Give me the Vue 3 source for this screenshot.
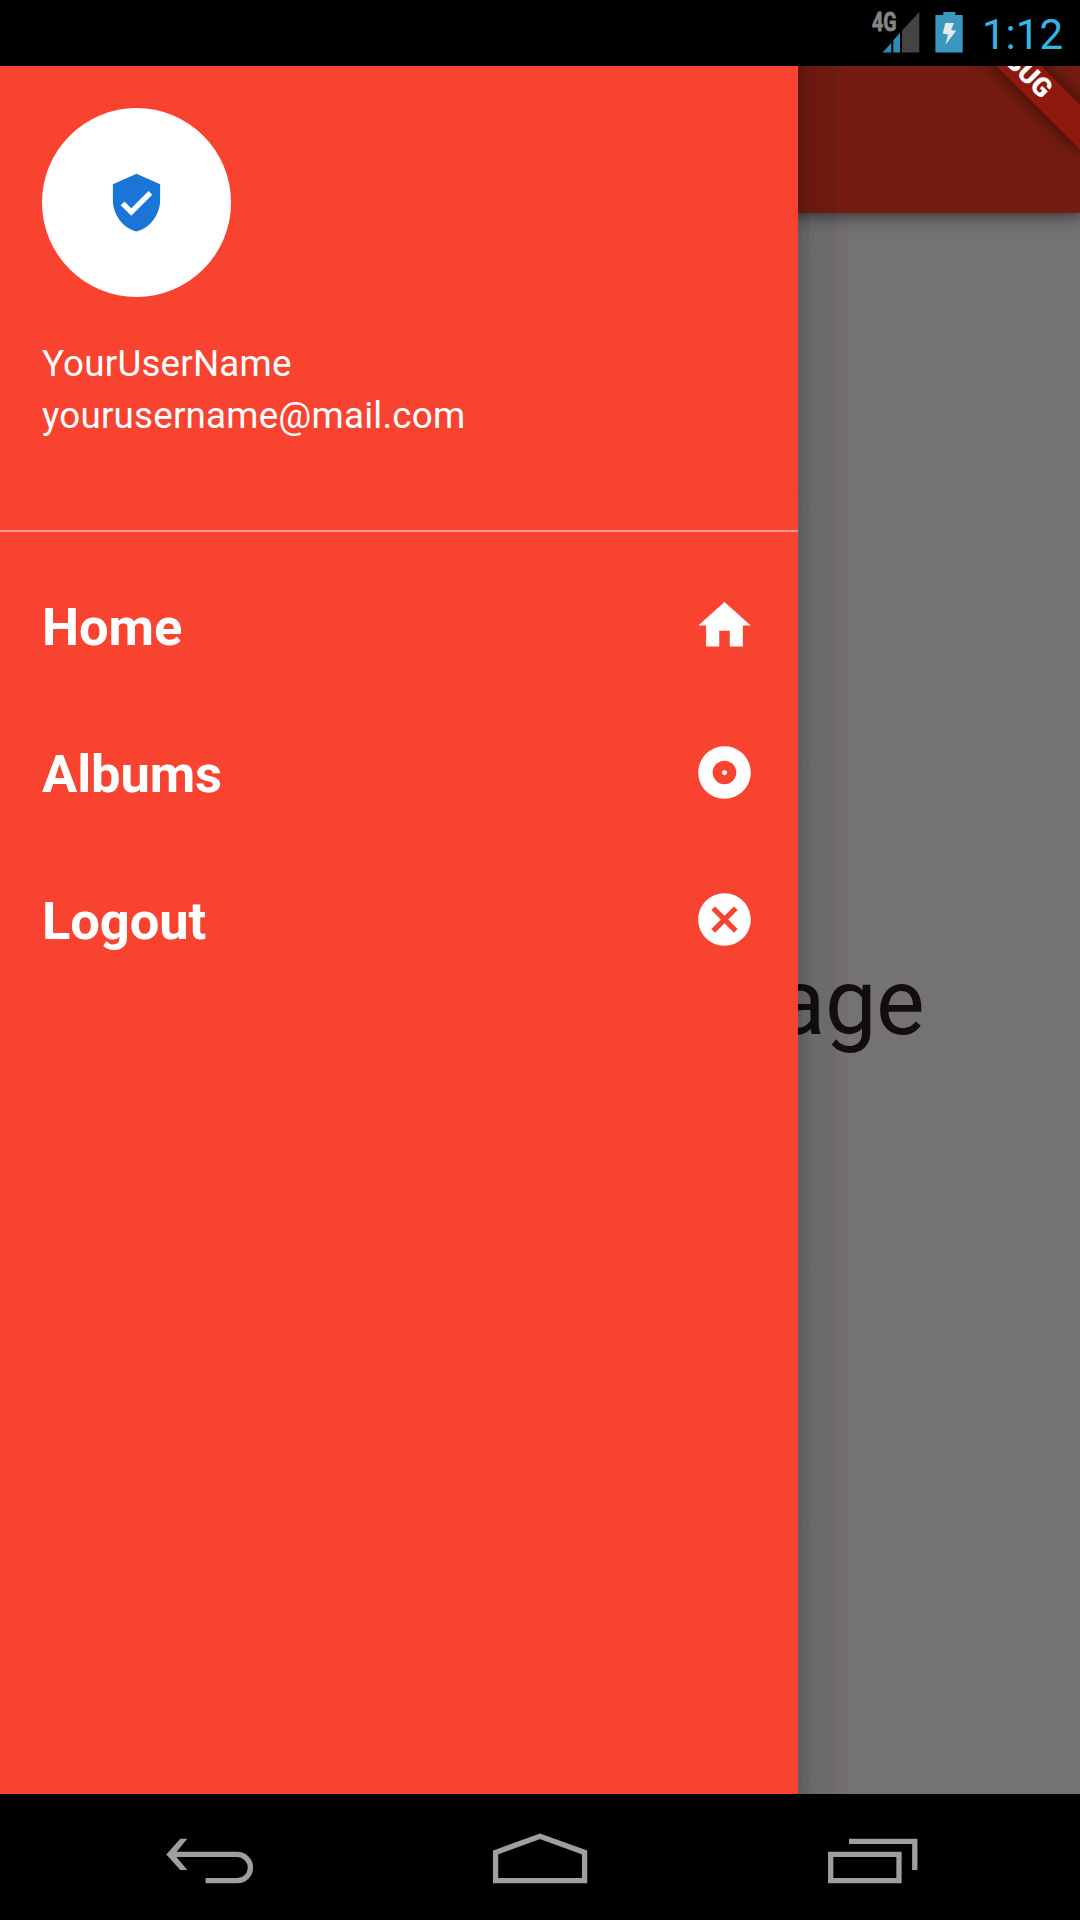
<script setup>
const menu = [
  { label: 'Home', path: 'M10 20v-6h4v6h5v-8h3L12 3 2 12h3v8z' },
  {
    label: 'Albums',
    path: 'M12 2C6.48 2 2 6.48 2 12s4.48 10 10 10 10-4.48 10-10S17.52 2 12 2zm0 14.5c-2.49 0-4.5-2.01-4.5-4.5S9.51 7.5 12 7.5s4.5 2.01 4.5 4.5-2.01 4.5-4.5 4.5zm0-5.5c-.55 0-1 .45-1 1s.45 1 1 1 1-.45 1-1-.45-1-1-1z',
  },
  {
    label: 'Logout',
    path: 'M12 2C6.47 2 2 6.47 2 12s4.47 10 10 10 10-4.47 10-10S17.53 2 12 2zm5 13.59L15.59 17 12 13.41 8.41 17 7 15.59 10.59 12 7 8.41 8.41 7 12 10.59 15.59 7 17 8.41 13.41 12 17 15.59z',
  },
]
</script>

<template>
  <div class="screen">
    <header class="status">
      <svg class="signal" viewBox="870 0 54 66">
        <text x="872" y="30.5" textLength="24.5" lengthAdjust="spacingAndGlyphs">4G</text>
        <path fill="#444" d="M902 30.7 919.3 12v40.4H902z" />
        <path fill="#2b8db3" d="M882.5 52.4 891.3 43v9.4zM893.3 40.3 900 32.8v19.6h-6.7z" />
      </svg>
      <svg class="battery" viewBox="935 0 28 66">
        <path fill="#3a97bd" d="M943.3 12h12v3h7.4v37.4h-27.3V15h7.9z" />
        <path fill="#e2eaf0" d="M945.3 23h8.6l-2.8 7 5 .8-10.6 13.9 2.5-10.3-5.3-.8z" />
      </svg>
      <span class="clock">1:12</span>
    </header>

    <main class="stage">
      <div class="page">
        <div class="appbar"></div>
        <div class="body"><span class="title">Page</span></div>
      </div>

      <aside class="drawer">
        <section class="account">
          <div class="avatar">
            <svg viewBox="0 0 24 24">
              <path d="M12 1L3 5v6c0 5.55 3.84 10.74 9 12 5.16-1.26 9-6.45 9-12V5l-9-4zm-2 16l-4-4 1.41-1.41L10 14.17l6.59-6.59L18 9l-8 8z" />
            </svg>
          </div>
          <div class="who">
            <div>YourUserName</div>
            <div>yourusername@mail.com</div>
          </div>
        </section>
        <div class="divider"></div>
        <nav>
          <a v-for="item in menu" :key="item.label" class="item">
            <span>{{ item.label }}</span>
            <svg viewBox="0 0 24 24"><path :d="item.path" /></svg>
          </a>
        </nav>
      </aside>
      <div class="edge"></div>
      <div class="banner">DEBUG</div>
    </main>

    <footer class="navbar">
      <svg viewBox="155 1794 110 126">
        <path class="line" d="M172 1854.4H237.3A13.1 13.1 0 0 1 237.3 1880.7H205.6" />
        <path class="solid" d="M166.3 1854.4 180.3 1838.8H187.3L174.4 1854.4 187.3 1870H180.3z" />
      </svg>
      <svg viewBox="485 1794 110 126">
        <path class="line" d="M495.6 1852.4 540 1836.2 584.6 1852.4V1880.7H495.6z" />
      </svg>
      <svg viewBox="815 1794 110 126">
        <path class="line" d="M830.7 1854.3H899V1880.7H830.7zM849 1841.3H914.8V1870" />
      </svg>
    </footer>
  </div>
</template>

<style>
body { margin: 0; background: #000; }
</style>

<style scoped>
.screen {
  width: 1080px;
  height: 1920px;
  display: flex;
  flex-direction: column;
  overflow: hidden;
  background: #000;
  font-family: Roboto, "Noto Sans", sans-serif;
}
svg { display: block; flex: none; }
.status {
  height: 66px;
  flex: none;
  display: flex;
  justify-content: flex-end;
  padding-right: 16px;
}
.signal { width: 54px; height: 66px; margin-right: 11px; }
.signal text {
  font-size: 25px;
  font-weight: 700;
  fill: #858585;
  stroke: #858585;
  stroke-width: .8;
}
.battery { width: 28px; height: 66px; margin-right: 19px; }
.clock {
  width: 82px;
  font-size: 42px;
  line-height: 70px;
  color: #33b5e5;
  white-space: nowrap;
}
.stage {
  position: relative;
  flex: 1;
  overflow: hidden;
}
.page {
  height: 100%;
  display: flex;
  flex-direction: column;
  background: #747274;
}
.appbar {
  position: relative;
  height: 147px;
  flex: none;
  background: #741c10;
  box-shadow: 0 6px 14px rgba(0, 0, 0, .36), 0 2px 5px rgba(0, 0, 0, .12);
}
.body {
  flex: 1;
  display: flex;
  align-items: center;
  justify-content: flex-end;
  padding: 0 156px 2px 0;
}
.title {
  font-size: 91.875px;
  line-height: 108px;
  letter-spacing: -.6px;
  color: #110d11;
}
.drawer {
  position: absolute;
  left: 0;
  top: 0;
  width: 798px;
  height: 100%;
  background: #f84331;
  color: #fff;
}
.account {
  box-sizing: border-box;
  height: 423px;
  padding: 42px 42px 0;
  border-bottom: 1px solid #ed3f35;
}
.avatar {
  width: 189px;
  height: 189px;
  border-radius: 50%;
  background: #fff;
  display: flex;
  align-items: center;
  justify-content: center;
}
.avatar svg { width: 63px; height: 63px; fill: #1976d6; }
.who {
  margin-top: 41px;
  font-size: 36.75px;
  line-height: 52px;
  letter-spacing: .2px;
}
.divider {
  height: 2px;
  margin: 41px 0 20px;
  background: #fc9d93;
}
.item {
  height: 147px;
  padding: 0 42px;
  display: flex;
  align-items: center;
  justify-content: space-between;
  font-size: 52.5px;
  line-height: 62px;
  font-weight: 700;
  letter-spacing: -.1px;
}
.item span { padding-top: 2px; }
.item svg { width: 63px; height: 63px; fill: #fff; }
.edge {
  position: absolute;
  left: 798px;
  top: 0;
  width: 50px;
  height: 100%;
  background: linear-gradient(90deg,
    rgba(0, 0, 0, .18) 0 5px, rgba(0, 8, 0, .14) 5px 11px,
    rgba(20, 0, 20, .09) 11px 17px, rgba(0, 0, 0, .07) 17px 30px,
    rgba(0, 40, 0, .09) 30px 38px, rgba(100, 0, 60, .035) 38px 50px);
}
.banner {
  position: absolute;
  left: 975px;
  top: 7.5px;
  width: 210px;
  height: 31.5px;
  transform-origin: 105px -73.5px;
  transform: rotate(45deg);
  background: #90190f;
  box-shadow: 0 0 18px rgba(0, 0, 0, .6);
  color: #fff;
  font-size: 26.775px;
  line-height: 31.5px;
  font-weight: 900;
  text-align: center;
}
.navbar {
  height: 126px;
  flex: none;
  display: flex;
  justify-content: space-between;
  padding: 0 155px;
}
.navbar svg { width: 110px; height: 126px; }
.line { fill: none; stroke: #9f9f9f; stroke-width: 5.3; }
.solid { fill: #9f9f9f; }
</style>
